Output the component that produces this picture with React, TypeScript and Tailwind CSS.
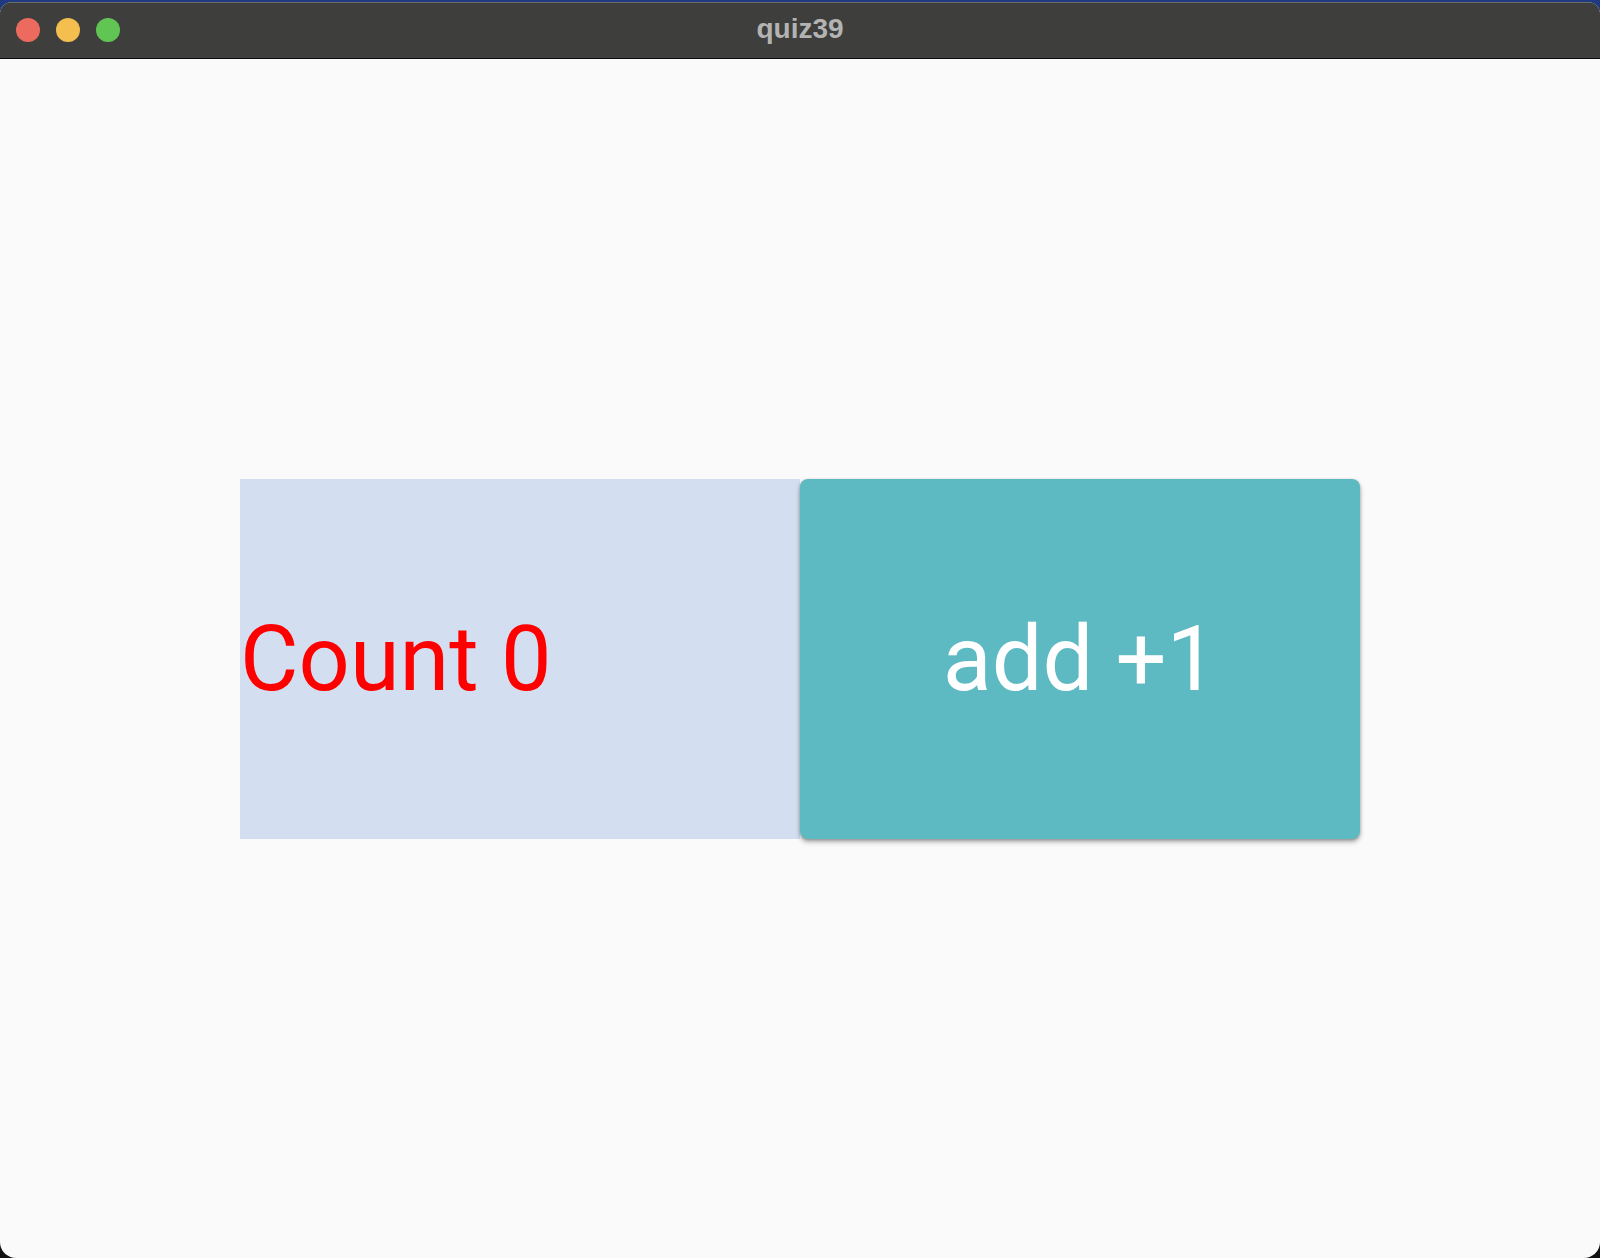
import React, { useState } from "react";

export default function App() {
  const [count, setCount] = useState(0);
  return (
    <div className="w-[1600px] h-[1258px] bg-gradient-to-b from-[#1f3a80] via-[#1a1a1a] to-[#111] pt-[2px] overflow-hidden">
      <div className="w-full h-[1256px] rounded-t-[12px] rounded-b-[16px] overflow-hidden flex flex-col bg-[#fafafa]">
        <div className="relative h-[57px] shrink-0 bg-[#3e3e3c] border-t border-[#6c6c6c] border-b border-b-[#0c0c0c] flex items-center justify-center">
          <div className="absolute left-[16px] top-[15px] flex gap-[16px]">
            <div className="w-[24px] h-[24px] rounded-full bg-[#ed6a5e]" />
            <div className="w-[24px] h-[24px] rounded-full bg-[#f5bf4f]" />
            <div className="w-[24px] h-[24px] rounded-full bg-[#61c554]" />
          </div>
          <span className="text-[28px] font-bold text-[#b3b3b3] font-['Liberation_Sans',Arial,sans-serif] leading-none -mt-[3px]">
            quiz39
          </span>
        </div>
        <div className="flex-1 flex items-center justify-center font-['Roboto',sans-serif]">
          <div className="flex">
            <div className="w-[560px] h-[360px] bg-[#d3dff0] flex items-center">
              <span className="text-[90px] text-[#ff0000] leading-none mt-[2px]">Count {count}</span>
            </div>
            <button
              onClick={() => setCount(count + 1)}
              className="w-[560px] h-[360px] bg-[#5db9c2] rounded-[8px] shadow-[0_3px_5px_rgba(0,0,0,0.3),0_1px_3px_rgba(0,0,0,0.2)] flex items-center justify-center"
            >
              <span className="text-[90px] text-white leading-none mt-[2px]">add +1</span>
            </button>
          </div>
        </div>
      </div>
    </div>
  );
}
